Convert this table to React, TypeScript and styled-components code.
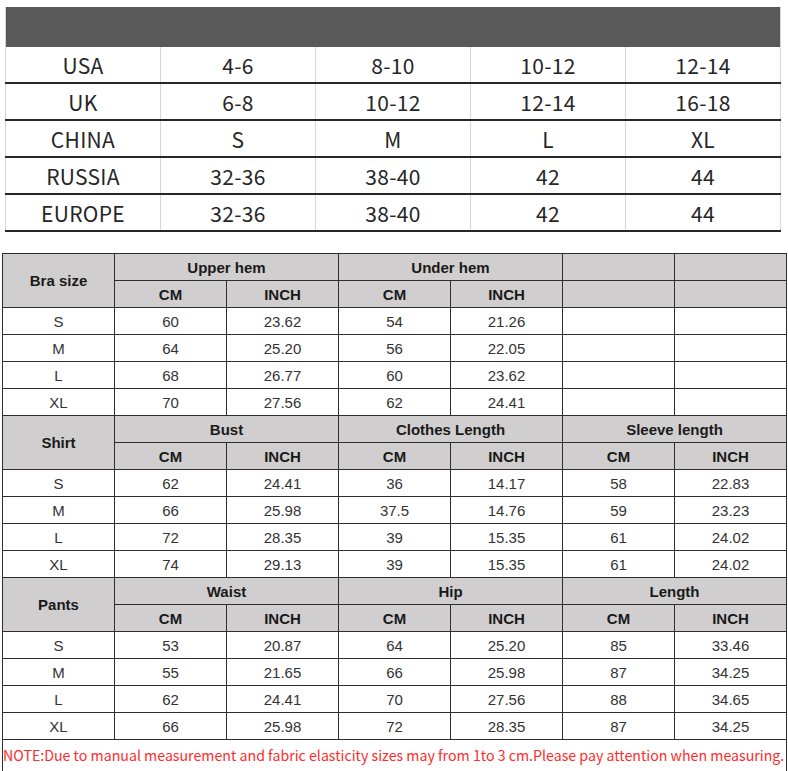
import React from "react";
import styled, { createGlobalStyle } from "styled-components";

const Global = createGlobalStyle`
  html, body { margin: 0; padding: 0; background: #ffffff; }
  body { width: 788px; height: 771px; overflow: hidden; }
`;

const Page = styled.div`
  display: flex;
  flex-direction: column;
  padding-top: 7px;
  gap: 21px;
`;

const TopTable = styled.table`
  margin-left: 5px;
  width: 776px;
  border-collapse: collapse;
  table-layout: fixed;
  font-family: "Noto Sans CJK SC", "Noto Sans", sans-serif;
  font-size: 21px;
  color: #262626;
`;

const Band = styled.td`
  height: 40px;
  padding: 0;
  background: #595959;
  border-left: 1px solid #d4d4d4;
  border-right: 1px solid #d4d4d4;
`;

const TopCell = styled.td`
  height: 33px;
  padding: 2px 0 0;
  text-align: center;
  vertical-align: middle;
  border-left: 1px solid #d6d6d6;
  border-right: 1px solid #d6d6d6;
  border-bottom: 2px solid #262626;
  line-height: 1;
  letter-spacing: 0.3px;
`;

const SizeTable = styled.table`
  margin-left: 2px;
  width: 785px;
  border-collapse: collapse;
  table-layout: fixed;
  font-family: "Liberation Sans", Arial, sans-serif;
  font-size: 15px;
  color: #333333;
`;

const Cell = styled.td<{ $head?: boolean }>`
  height: 26px;
  padding: 0;
  text-align: center;
  vertical-align: middle;
  border: 1px solid #2e2e2e;
  background: ${(p) => (p.$head ? "#d0cece" : "#ffffff")};
  font-weight: ${(p) => (p.$head ? 700 : 400)};
  color: ${(p) => (p.$head ? "#1a1a1a" : "#333333")};
  line-height: 1;
`;

const NoteCell = styled.td`
  height: 30px;
  padding: 0 0 2px 0;
  border: 1px solid #2e2e2e;
  border-bottom-color: #555;
  font-family: "Noto Sans CJK SC", "Noto Sans", sans-serif;
  font-size: 14.2px;
  letter-spacing: 0;
  color: #ff2a2a;
  white-space: nowrap;
  overflow: hidden;
  vertical-align: middle;
  line-height: 1;
`;

const countries: string[][] = [
  ["USA", "4-6", "8-10", "10-12", "12-14"],
  ["UK", "6-8", "10-12", "12-14", "16-18"],
  ["CHINA", "S", "M", "L", "XL"],
  ["RUSSIA", "32-36", "38-40", "42", "44"],
  ["EUROPE", "32-36", "38-40", "42", "44"],
];

type Section = {
  title: string;
  groups: string[];
  rows: string[][];
};

const sections: Section[] = [
  {
    title: "Bra size",
    groups: ["Upper hem", "Under hem"],
    rows: [
      ["S", "60", "23.62", "54", "21.26", "", ""],
      ["M", "64", "25.20", "56", "22.05", "", ""],
      ["L", "68", "26.77", "60", "23.62", "", ""],
      ["XL", "70", "27.56", "62", "24.41", "", ""],
    ],
  },
  {
    title: "Shirt",
    groups: ["Bust", "Clothes Length", "Sleeve length"],
    rows: [
      ["S", "62", "24.41", "36", "14.17", "58", "22.83"],
      ["M", "66", "25.98", "37.5", "14.76", "59", "23.23"],
      ["L", "72", "28.35", "39", "15.35", "61", "24.02"],
      ["XL", "74", "29.13", "39", "15.35", "61", "24.02"],
    ],
  },
  {
    title: "Pants",
    groups: ["Waist", "Hip", "Length"],
    rows: [
      ["S", "53", "20.87", "64", "25.20", "85", "33.46"],
      ["M", "55", "21.65", "66", "25.98", "87", "34.25"],
      ["L", "62", "24.41", "70", "27.56", "88", "34.65"],
      ["XL", "66", "25.98", "72", "28.35", "87", "34.25"],
    ],
  },
];

function SectionRows({ s }: { s: Section }) {
  const full = s.groups.length === 3;
  return (
    <>
      <tr>
        <Cell $head rowSpan={2}>{s.title}</Cell>
        {s.groups.map((g) => (
          <Cell $head colSpan={2} key={g}>{g}</Cell>
        ))}
        {!full && (
          <>
            <Cell $head />
            <Cell $head />
          </>
        )}
      </tr>
      <tr>
        {s.groups.map((g) => (
          <React.Fragment key={g}>
            <Cell $head>CM</Cell>
            <Cell $head>INCH</Cell>
          </React.Fragment>
        ))}
        {!full && (
          <>
            <Cell $head />
            <Cell $head />
          </>
        )}
      </tr>
      {s.rows.map((r) => (
        <tr key={r[0]}>
          {r.map((v, i) => (
            <Cell key={i}>{v}</Cell>
          ))}
        </tr>
      ))}
    </>
  );
}

export default function App() {
  return (
    <>
      <Global />
      <Page>
        <TopTable>
          <tbody>
            <tr>
              <Band colSpan={5} />
            </tr>
            {countries.map((r) => (
              <tr key={r[0]}>
                {r.map((v, i) => (
                  <TopCell key={i}>{v}</TopCell>
                ))}
              </tr>
            ))}
          </tbody>
        </TopTable>
        <SizeTable>
          <colgroup>
            {Array.from({ length: 7 }).map((_, i) => (
              <col key={i} style={{ width: `${100 / 7}%` }} />
            ))}
          </colgroup>
          <tbody>
            {sections.map((s) => (
              <SectionRows s={s} key={s.title} />
            ))}
            <tr>
              <NoteCell colSpan={7}>
                NOTE:Due to manual measurement and fabric elasticity sizes may from 1to 3 cm.Please pay attention when measuring.
              </NoteCell>
            </tr>
          </tbody>
        </SizeTable>
      </Page>
    </>
  );
}
